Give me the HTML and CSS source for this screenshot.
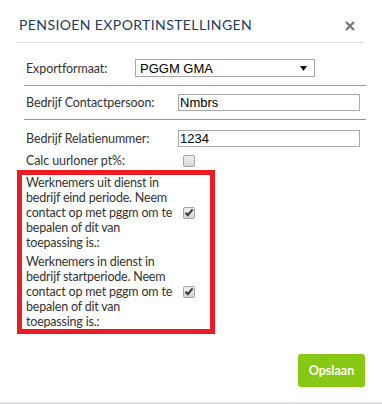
FILE: index.html
```html
<!DOCTYPE html>
<html>
<head>
<meta charset="utf-8">
<link rel="stylesheet" href="styles.css">
</head>
<body>
<div class="dialog">
  <div class="header">
    <span class="title">PENSIOEN EXPORTINSTELLINGEN</span>
    <svg class="close" width="10" height="10" viewBox="0 0 10 10"><path d="M1 1 L9 9 M9 1 L1 9" stroke="#7a7a7a" stroke-width="2.4" stroke-linecap="butt"/></svg>
  </div>
  <div class="form">
    <div class="row row-select">
      <span class="label">Exportformaat:</span>
      <div class="select"><span>PGGM GMA</span><svg width="7" height="5" viewBox="0 0 7 5"><path d="M0 0 H7 L3.5 5 Z" fill="#111"/></svg></div>
    </div>
    <div class="divider"></div>
    <div class="row row-input">
      <span class="label">Bedrijf Contactpersoon:</span>
      <div class="input">Nmbrs</div>
    </div>
    <div class="divider"></div>
    <div class="row row-input row-gap">
      <span class="label">Bedrijf Relatienummer:</span>
      <div class="input">1234</div>
    </div>
    <div class="row row-check">
      <span class="label">Calc uurloner pt%:</span>
      <span class="checkbox"></span>
    </div>
    <div class="highlight">
      <div class="check-item">
        <span class="long-label">Werknemers uit dienst in bedrijf eind periode. Neem contact op met pggm om te bepalen of dit van toepassing is.:</span>
        <span class="checkbox checked"><svg width="10" height="9" viewBox="0 0 10 9"><path d="M1.5 4.8 L3.8 7.2 L8.6 1.4" fill="none" stroke="#3a3a3a" stroke-width="2"/></svg></span>
      </div>
      <div class="check-item second">
        <span class="long-label">Werknemers in dienst in bedrijf startperiode. Neem contact op met pggm om te bepalen of dit van toepassing is.:</span>
        <span class="checkbox checked"><svg width="10" height="9" viewBox="0 0 10 9"><path d="M1.5 4.8 L3.8 7.2 L8.6 1.4" fill="none" stroke="#3a3a3a" stroke-width="2"/></svg></span>
      </div>
    </div>
  </div>
  <div class="footer">
    <button class="save">Opslaan</button>
  </div>
</div>
</body>
</html>
```
FILE: styles.css
```css
html, body {
  margin: 0;
  padding: 0;
  background: #ffffff;
}

.dialog {
  width: 382px;
  font-family: Lato, "Liberation Sans", sans-serif;
  color: #333333;
  border-bottom: 2px solid #dde3ed;
}

.header {
  display: flex;
  align-items: center;
  justify-content: space-between;
  margin: 0 18px 0 16px;
  padding: 15px 9px 7px 3px;
  border-bottom: 1px solid #dcdcdc;
  height: 20px;
}

.title {
  font-size: 14px;
  line-height: 20px;
  letter-spacing: 0.4px;
  color: #253a5e;
}

.close {
  display: block;
  margin-top: 1px;
}

.form {
  padding-top: 16px;
}

.row {
  display: flex;
  align-items: center;
  padding-left: 26px;
  font-size: 12.5px;
  letter-spacing: -0.1px;
}

.label {
  color: #333333;
  white-space: nowrap;
}

.row-select {
  height: 18px;
}

.row-select .label {
  width: 109px;
}

.select {
  box-sizing: border-box;
  width: 180px;
  height: 18px;
  border: 1px solid #a9a9a9;
  display: flex;
  align-items: center;
  justify-content: space-between;
  padding: 0 7px 0 4px;
  font-family: "Liberation Sans", Arial, sans-serif;
  font-size: 13px;
  letter-spacing: 0;
  color: #000;
}

.select svg {
  display: block;
}

.divider {
  height: 1px;
  background: #9a9a9a;
  margin: 8px 16px 8px 24px;
}

.row-input {
  height: 17px;
}

.row-gap {
  margin-top: 10px;
}

.row-input .label {
  width: 152px;
}

.input {
  box-sizing: border-box;
  width: 182px;
  height: 17px;
  border: 1px solid #a9a9a9;
  padding: 0 2px 0 1px;
  font-family: "Liberation Sans", Arial, sans-serif;
  font-size: 13px;
  letter-spacing: 0;
  line-height: 15px;
  color: #000;
}

.row-check {
  margin-top: 4px;
  height: 19px;
}

.row-check .label {
  width: 157px;
}

.checkbox {
  box-sizing: border-box;
  display: flex;
  align-items: center;
  justify-content: center;
  width: 12px;
  height: 12px;
  border: 1px solid #a6a6a6;
  border-radius: 2px;
  background: linear-gradient(#f0f0f0, #d6d6d6);
  flex: none;
}

.checkbox svg {
  display: block;
}

.highlight {
  margin-left: 17px;
  width: 198px;
  box-sizing: border-box;
  border: 5px solid #ec1c24;
  padding: 0 0 0 4px;
  font-size: 12.5px;
}

.check-item {
  display: flex;
  align-items: center;
}

.check-item.second {
  margin-top: 4px;
}

.long-label {
  width: 153px;
  margin-right: 4px;
  line-height: 15px;
  letter-spacing: -0.2px;
  color: #333333;
}

.footer {
  display: flex;
  justify-content: flex-end;
  padding: 20px 17px 15px 0;
}

.save {
  width: 67px;
  height: 33px;
  border: none;
  border-radius: 3px;
  background: #86c813;
  color: #ffffff;
  font-family: Lato, "Liberation Sans", sans-serif;
  font-size: 12.5px;
  font-weight: 700;
  padding: 0;
}
```
